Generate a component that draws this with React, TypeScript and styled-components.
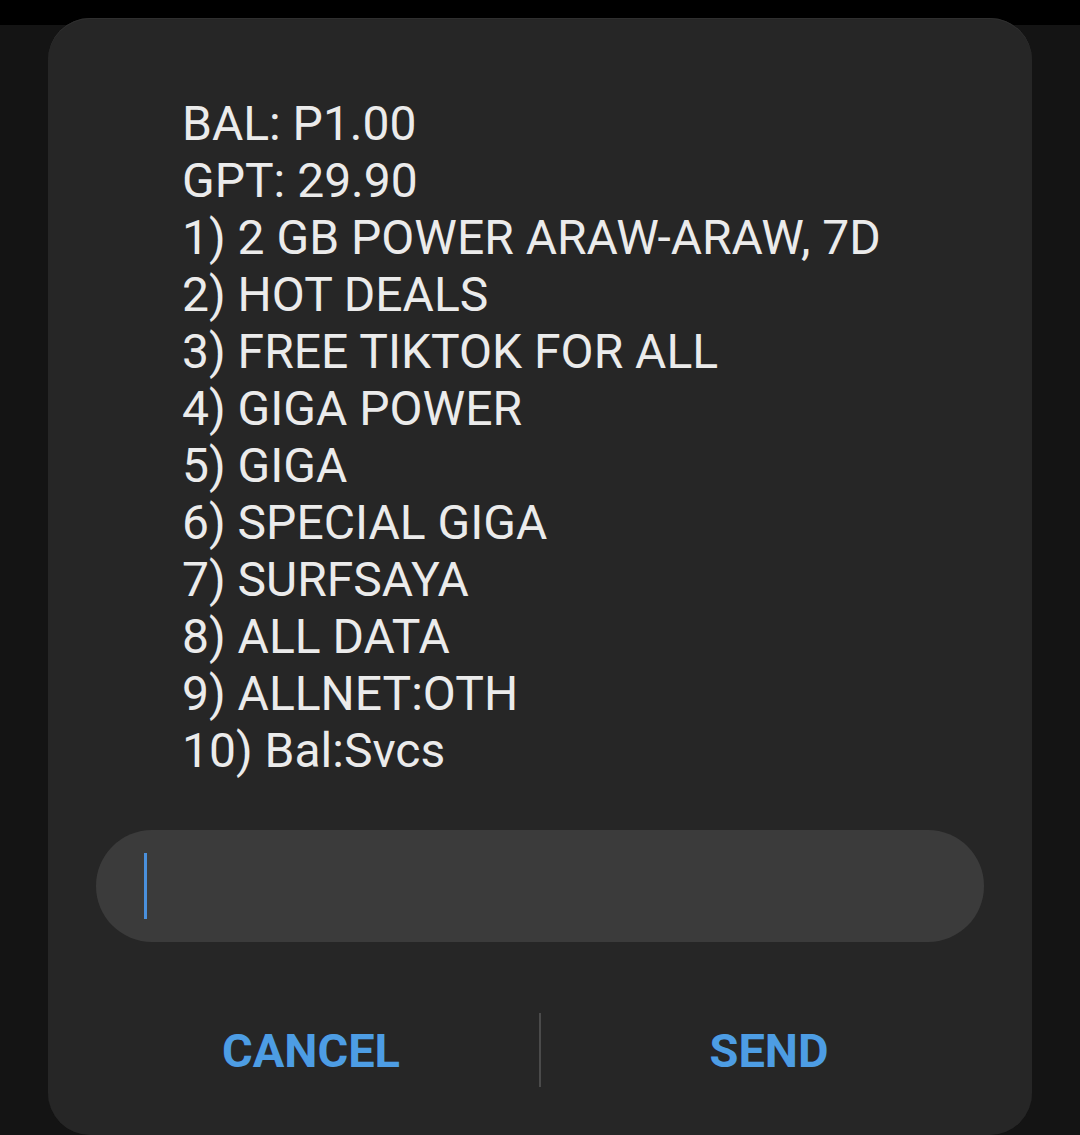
import React, {FC} from "react";
import styled, {createGlobalStyle} from "styled-components";

const menuLines = [
    "BAL: P1.00",
    "GPT: 29.90",
    "1) 2 GB POWER ARAW-ARAW, 7D",
    "2) HOT DEALS",
    "3) FREE TIKTOK FOR ALL",
    "4) GIGA POWER",
    "5) GIGA",
    "6) SPECIAL GIGA",
    "7) SURFSAYA",
    "8) ALL DATA",
    "9) ALLNET:OTH",
    "10) Bal:Svcs",
]

const App:FC = () => {
    return(
        <>
            <GlobalStyle/>
            <Dialog>
                <Message>
                    {menuLines.map((line)=>(
                        <Line key={line}>{line}</Line>
                    ))}
                </Message>
                <ReplyField>
                    <Caret/>
                </ReplyField>
                <Actions>
                    <ActionButton>CANCEL</ActionButton>
                    <Separator/>
                    <ActionButton>SEND</ActionButton>
                </Actions>
            </Dialog>
        </>
    )
}

const GlobalStyle = createGlobalStyle`
  html, body {
    margin: 0;
    padding: 0;
  }
  body {
    width: 1080px;
    height: 1135px;
    overflow: hidden;
    background: linear-gradient(to bottom, #000 25px, #141414 25px);
    font-family: Roboto, "Liberation Sans", sans-serif;
  }
`

const Dialog = styled.div`
  margin: 18px 48px 0;
  height: 1117px;
  box-sizing: border-box;
  background: #262626;
  border-radius: 42px;
  box-shadow: inset 0 1px 0 #2f2f2f;
  display: flex;
  flex-direction: column;
`

const Message = styled.div`
  padding: 77px 0 0 134px;
  color: #ebebeb;
  font-size: 48px;
  line-height: 57px;
`

const Line = styled.div`
  white-space: nowrap;
`

const ReplyField = styled.div`
  margin: 51px 48px 0;
  height: 112px;
  border-radius: 56px;
  background: #3b3b3b;
  display: flex;
  align-items: center;
  padding-left: 48px;
`

const Caret = styled.span`
  width: 3px;
  height: 66px;
  background: #4a90dc;
`

const Actions = styled.div`
  margin-top: 71px;
  padding: 0 35px;
  height: 74px;
  display: flex;
  align-items: center;
`

const ActionButton = styled.button`
  flex: 1;
  border: none;
  background: transparent;
  color: #4d9de4;
  font-family: Roboto, "Liberation Sans", sans-serif;
  font-weight: 700;
  font-size: 47px;
  padding: 0;
  text-align: center;
`

const Separator = styled.div`
  width: 2px;
  align-self: stretch;
  background: #4a4a4a;
`

export default App
